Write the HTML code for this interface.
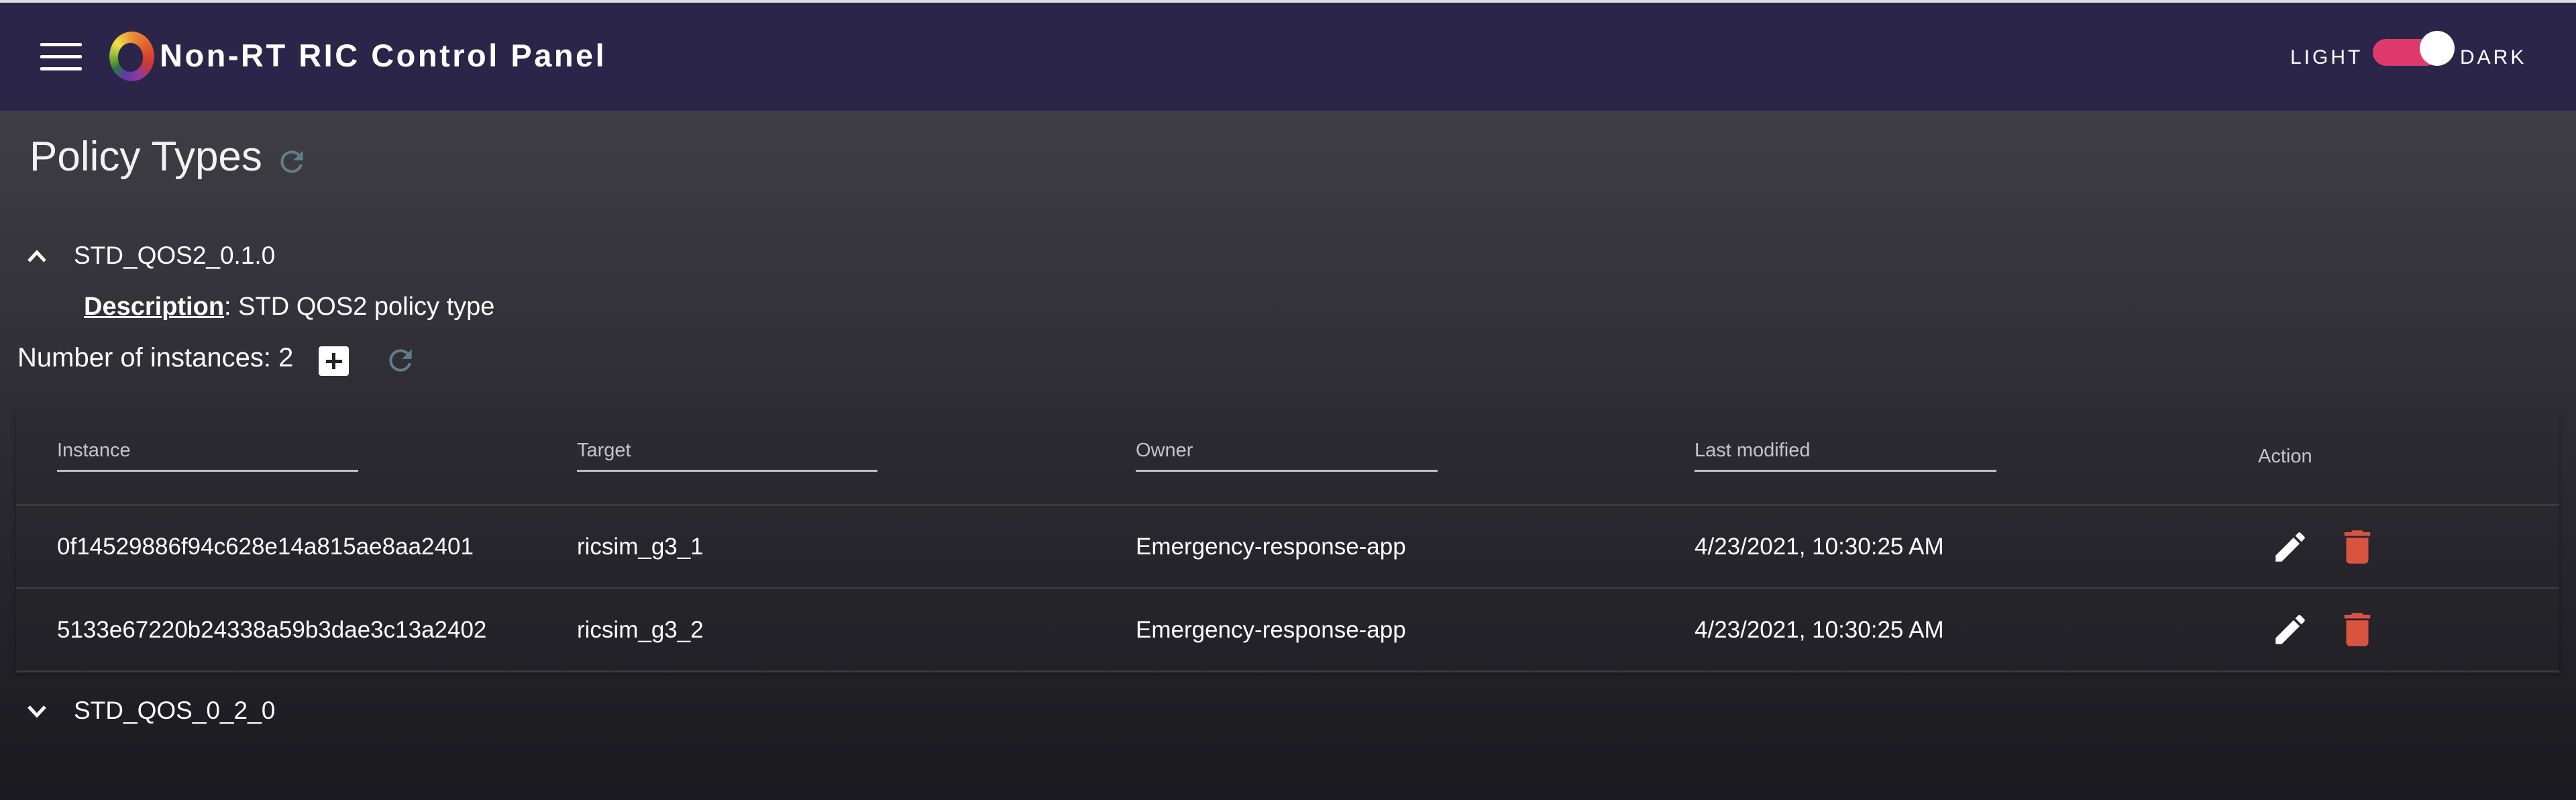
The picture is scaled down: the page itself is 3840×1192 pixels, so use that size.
<!DOCTYPE html>
<html><head><meta charset="utf-8"><style>
*{margin:0;padding:0;box-sizing:border-box}
html,body{width:3840px;height:1192px;overflow:hidden}
body{font-family:"Liberation Sans",sans-serif;color:#fff;background:linear-gradient(180deg,#3f3e45 0px,#3f3e45 165px,#2e2d33 600px,#1b1a1f 1192px);position:relative}
.strip{position:absolute;left:0;top:0;width:3840px;height:4px;background:#dcdce2}
.hdr{position:absolute;left:0;top:4px;width:3840px;height:161px;background:#2b2549}
.abs{position:absolute;white-space:nowrap}
.hb{position:absolute;left:60px;width:62px;height:5px;background:#fff;border-radius:2px}
.logo{position:absolute;left:163px;top:47px;width:67px;height:74px;border-radius:50%;background:conic-gradient(from 0deg,#e8903a 0deg,#dc4a2c 80deg,#c63a3a 120deg,#8e3aa0 160deg,#5a3aa8 200deg,#2e7a3a 235deg,#8ab83a 270deg,#f0e04a 310deg,#e8903a 360deg);-webkit-mask:radial-gradient(ellipse 19px 22px at 47% 52%,transparent 96%,#000 100%);mask:radial-gradient(ellipse 19px 22px at 47% 52%,transparent 96%,#000 100%)}
.title{left:238px;top:55px;font-size:47px;font-weight:bold;letter-spacing:3.5px}
.tg{font-size:30px;letter-spacing:4px;top:69px}
.track{position:absolute;left:3537px;top:58px;width:100px;height:40px;border-radius:20px;background:#de3a6e}
.thumb{position:absolute;left:3607px;top:46px;width:52px;height:52px;border-radius:50%;background:#fff}
.card{position:absolute;left:24px;top:612px;width:3791px;height:389px;background:rgba(40,39,46,0.2);box-shadow:0 3px 8px rgba(0,0,0,.3)}
.th{font-size:29px;color:#c4c3c8;top:655px}
.ul{position:absolute;top:700px;height:3px;background:#c0bfc4}
.div{position:absolute;left:24px;width:3791px;height:3px;background:#3b3a40}
.td{font-size:35px;color:#fff}
</style></head><body>
<div class="strip"></div>
<div class="hdr"></div>
<div class="hb" style="top:64px"></div><div class="hb" style="top:82px"></div><div class="hb" style="top:100px"></div>
<div class="logo"></div>
<div class="abs title">Non-RT RIC Control Panel</div>
<div class="abs tg" style="left:3414px">LIGHT</div>
<div class="track"></div><div class="thumb"></div>
<div class="abs tg" style="left:3667px">DARK</div>

<div class="abs" style="left:44px;top:198px;font-size:62px;font-weight:300;color:#f2f2f2">Policy Types</div>
<svg class="abs" style="left:410px;top:216px" width="50" height="50" viewBox="0 0 24 24"><path fill="#607d8b" d="M17.65 6.35A7.96 7.96 0 0 0 12 4a8 8 0 1 0 7.73 10h-2.08A6 6 0 1 1 12 6c1.66 0 3.14.69 4.22 1.78L13 11h7V4l-2.35 2.35z"/></svg>

<svg class="abs" style="left:40px;top:370px" width="30" height="22" viewBox="0 0 30 22"><path fill="none" stroke="#fff" stroke-width="5" d="M3 19 L15 6 L27 19"/></svg>
<div class="abs" style="left:110px;top:360px;font-size:37px">STD_QOS2_0.1.0</div>
<div class="abs" style="left:125px;top:436px;font-size:38px"><b style="text-decoration:underline;text-decoration-thickness:3px">Description</b>: STD QOS2 policy type</div>
<div class="abs" style="left:26px;top:511px;font-size:40px">Number of instances: 2</div>
<div class="abs" style="left:475px;top:516px;width:45px;height:44px;background:#fff;border-radius:4px"></div>
<div class="abs" style="left:495px;top:526px;width:5px;height:24px;background:#222"></div>
<div class="abs" style="left:486px;top:536px;width:24px;height:5px;background:#222"></div>
<svg class="abs" style="left:572px;top:512px" width="50" height="50" viewBox="0 0 24 24"><path fill="#607d8b" d="M17.65 6.35A7.96 7.96 0 0 0 12 4a8 8 0 1 0 7.73 10h-2.08A6 6 0 1 1 12 6c1.66 0 3.14.69 4.22 1.78L13 11h7V4l-2.35 2.35z"/></svg>

<div class="card"></div>
<div class="abs th" style="left:85px">Instance</div><div class="ul" style="left:85px;width:449px"></div>
<div class="abs th" style="left:860px">Target</div><div class="ul" style="left:860px;width:448px"></div>
<div class="abs th" style="left:1693px">Owner</div><div class="ul" style="left:1693px;width:450px"></div>
<div class="abs th" style="left:2526px">Last modified</div><div class="ul" style="left:2526px;width:450px"></div>
<div class="abs th" style="left:3366px;top:664px">Action</div>
<div class="div" style="top:751px"></div>
<div class="div" style="top:875px"></div>
<div class="div" style="top:999px"></div>

<div class="abs td" style="left:85px;top:795px">0f14529886f94c628e14a815ae8aa2401</div>
<div class="abs td" style="left:860px;top:795px">ricsim_g3_1</div>
<div class="abs td" style="left:1693px;top:795px">Emergency-response-app</div>
<div class="abs td" style="left:2526px;top:795px">4/23/2021, 10:30:25 AM</div>
<div class="abs td" style="left:85px;top:919px">5133e67220b24338a59b3dae3c13a2402</div>
<div class="abs td" style="left:860px;top:919px">ricsim_g3_2</div>
<div class="abs td" style="left:1693px;top:919px">Emergency-response-app</div>
<div class="abs td" style="left:2526px;top:919px">4/23/2021, 10:30:25 AM</div>

<svg class="abs" style="left:3385px;top:786px" width="58" height="58" viewBox="0 0 24 24"><path fill="#fff" d="M3 17.25V21h3.75L17.81 9.94l-3.75-3.75L3 17.25zM20.71 7.04a1 1 0 0 0 0-1.41l-2.34-2.34a1 1 0 0 0-1.41 0l-1.83 1.83 3.75 3.75 1.83-1.83z"/></svg>
<svg class="abs" style="left:3481px;top:782px" width="66" height="66" viewBox="0 0 24 24"><path fill="#d95440" d="M6 19c0 1.1.9 2 2 2h8c1.1 0 2-.9 2-2V7H6v12zM19 4h-3.5l-1-1h-5l-1 1H5v2h14V4z"/></svg>
<svg class="abs" style="left:3385px;top:909px" width="58" height="58" viewBox="0 0 24 24"><path fill="#fff" d="M3 17.25V21h3.75L17.81 9.94l-3.75-3.75L3 17.25zM20.71 7.04a1 1 0 0 0 0-1.41l-2.34-2.34a1 1 0 0 0-1.41 0l-1.83 1.83 3.75 3.75 1.83-1.83z"/></svg>
<svg class="abs" style="left:3481px;top:905px" width="66" height="66" viewBox="0 0 24 24"><path fill="#d95440" d="M6 19c0 1.1.9 2 2 2h8c1.1 0 2-.9 2-2V7H6v12zM19 4h-3.5l-1-1h-5l-1 1H5v2h14V4z"/></svg>

<svg class="abs" style="left:40px;top:1050px" width="30" height="22" viewBox="0 0 30 22"><path fill="none" stroke="#fff" stroke-width="5" d="M3 3 L15 16 L27 3"/></svg>
<div class="abs" style="left:110px;top:1038px;font-size:37px">STD_QOS_0_2_0</div>
</body></html>
